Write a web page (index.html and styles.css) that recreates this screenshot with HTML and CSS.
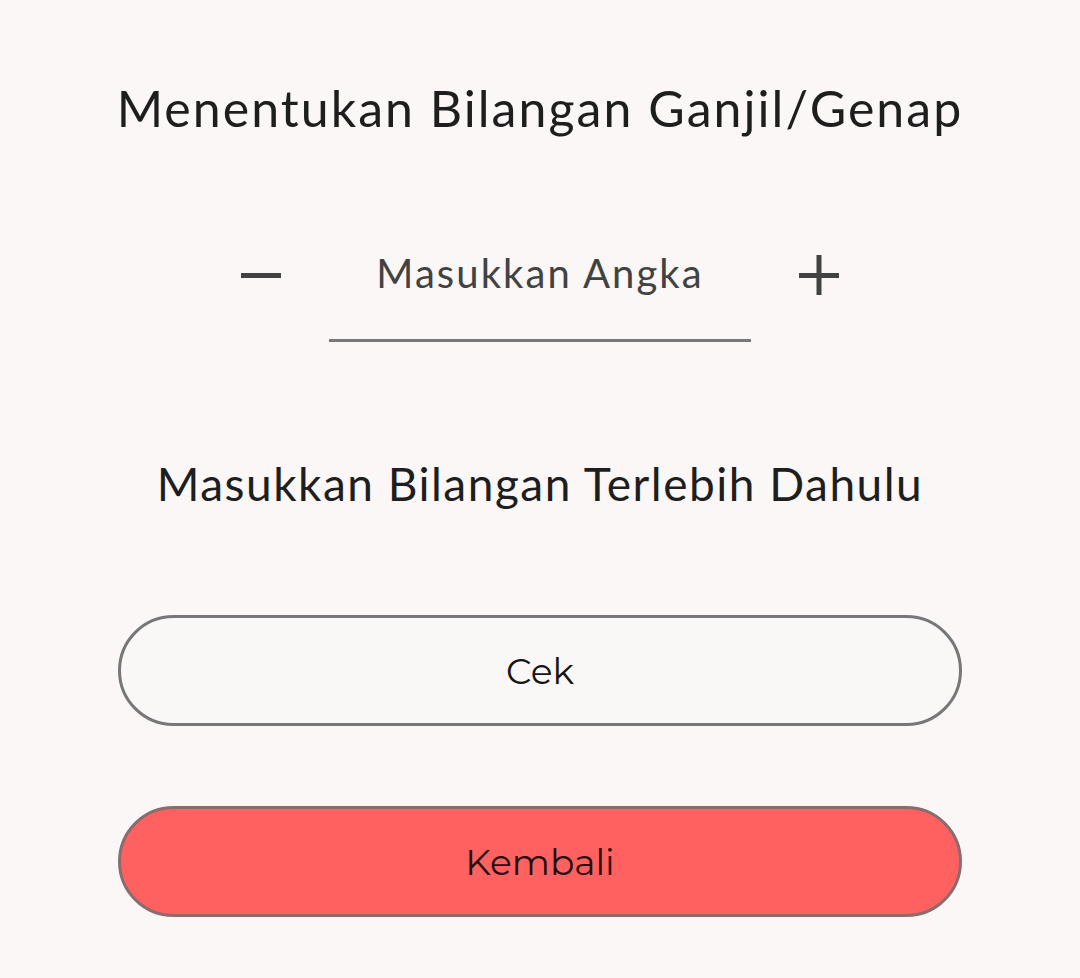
FILE: index.html
```html
<!DOCTYPE html>
<html lang="id">
<head>
<meta charset="utf-8">
<title>Ganjil/Genap</title>
<link rel="stylesheet" href="styles.css">
</head>
<body>
<main class="page">
  <h1 class="title">Menentukan Bilangan Ganjil/Genap</h1>
  <div class="stepper">
    <button class="step-btn" aria-label="kurang">
      <svg width="40" height="40" viewBox="0 0 40 40"><rect x="0" y="18" width="40" height="5" fill="#424242"/></svg>
    </button>
    <div class="field">
      <span class="placeholder">Masukkan Angka</span>
    </div>
    <button class="step-btn" aria-label="tambah">
      <svg width="40" height="40" viewBox="0 0 40 40"><rect x="0" y="18" width="40" height="5" fill="#424242"/><rect x="17.5" y="0" width="5" height="40" fill="#424242"/></svg>
    </button>
  </div>
  <p class="message">Masukkan Bilangan Terlebih Dahulu</p>
  <button class="pill pill-outline">Cek</button>
  <button class="pill pill-red">Kembali</button>
</main>
</body>
</html>
```
FILE: styles.css
```css
html, body {
  margin: 0;
  padding: 0;
  background: #faf7f6;
}
.page {
  width: 1080px;
  height: 978px;
  display: flex;
  flex-direction: column;
  align-items: center;
  font-family: Lato, "Noto Sans", sans-serif;
}
.title {
  margin: 78px 0 0;
  font-weight: 400;
  font-size: 50px;
  line-height: 60px;
  letter-spacing: 2.05px;
  color: #1e1e1e;
}
.stepper {
  margin-top: 100px;
  display: flex;
  align-items: flex-start;
  gap: 48px;
}
.step-btn {
  border: 0;
  background: none;
  padding: 0;
  width: 40px;
  height: 40px;
  margin-top: 17px;
}
.step-btn svg { display: block; }
.field {
  width: 422px;
  height: 101px;
  border-bottom: 3px solid #78787a;
  display: flex;
  justify-content: center;
}
.placeholder {
  font-size: 40px;
  line-height: 70px;
  letter-spacing: 2.1px;
  color: #424242;
}
.message {
  margin: 114px 0 0;
  font-size: 46px;
  line-height: 56px;
  letter-spacing: 1.5px;
  color: #1e1e1e;
}
.pill {
  width: 844px;
  height: 111px;
  border-radius: 56px;
  border: 3px solid #77777a;
  font-family: Montserrat, "Noto Sans", sans-serif;
  font-size: 36px;
  color: #141414;
  box-sizing: border-box;
}
.pill-outline {
  margin-top: 103px;
  background: #faf8f7;
}
.pill-red {
  margin-top: 80px;
  background: #ff6161;
  border-color: #8a6c6e;
  color: #260d0d;
}
```
